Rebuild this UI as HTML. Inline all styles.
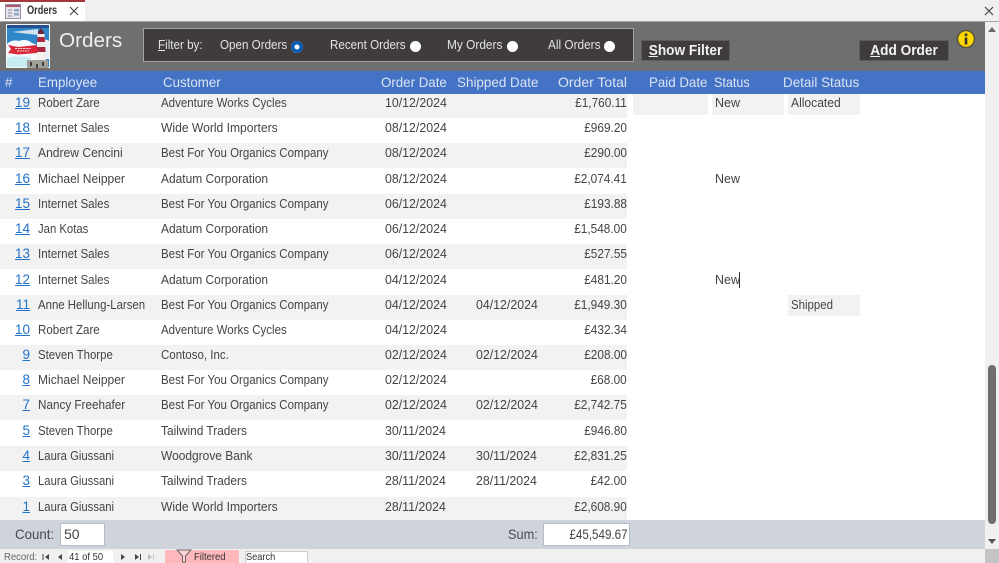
<!DOCTYPE html>
<html style="overflow:hidden;width:999px;height:563px"><head><meta charset="utf-8"><title>Orders</title>
<style>
html,body{margin:0;padding:0;background:#fff}
#p{width:999px;height:563px;position:relative;overflow:hidden;font-family:"Liberation Sans",sans-serif;font-size:13px;color:#444}
body{width:999px;height:563px;overflow:hidden}
div,span,u{white-space:nowrap}
.a{position:absolute}
.sx{transform-origin:0 50%}
.r{position:absolute;left:0;width:985px;height:25px;line-height:25px}
.g::before{content:"";position:absolute;left:0;top:3px;width:627px;height:25px;background:#f2f2f2}
.r span{position:absolute;top:0;transform-origin:0 50%;transform:scaleX(var(--s,.89))}
.r .n{right:955px;color:#2172c8;text-decoration:underline;font-size:13.5px;transform:none}
.e{left:38px}.c{left:161px;--s:.885}.d{left:385px;--s:.95}.s{left:476px;--s:.95}
.r .t{right:358px;--s:.91;transform-origin:100% 50%}
.st{left:715px;--s:.96}.ds{left:791px;--s:.93}
.h{position:absolute;top:71px;height:23px;line-height:23px;color:#dbe4f4;font-size:14px;transform-origin:0 50%;transform:scaleX(var(--s,.95))}
.f{position:absolute;top:38px;line-height:14px;color:#e2e2e2;font-size:12.5px;transform-origin:0 50%;transform:scaleX(var(--s,.93))}
.o{position:absolute;width:11px;height:11px;border-radius:50%;background:#fff;top:41px}
.b{position:absolute;top:40px;height:21px;background:#403c3c;border:1px solid #5c5c5c;box-sizing:border-box}
.b div{position:absolute;top:0;left:0;width:100%;line-height:20px;color:#f2f2f2;font-weight:bold;font-size:15px;text-align:center;transform:scaleX(.91)}
.box{position:absolute;background:#f2f2f2;height:21px}
.nv{position:absolute;top:552px;font-size:10.4px;line-height:11px;height:11px;overflow:hidden;color:#333;transform-origin:0 50%}
</style></head><body><div id="p">

<!-- tab strip -->
<div class="a" style="left:0;top:0;width:999px;height:22px;background:#f0f0f0;border-bottom:1px solid #a6a6a6;box-sizing:border-box"></div>
<div class="a" style="left:0;top:0;width:85px;height:21px;background:#fff"></div>
<div class="a" style="left:0;top:0;width:85px;height:2px;background:#a4373a"></div>
<svg class="a" style="left:5px;top:4px" width="16" height="15" viewBox="0 0 16 15"><rect x=".5" y=".5" width="15" height="14" fill="#e8e4ec" stroke="#9a90a8"/><rect x="1" y="1" width="14" height="2" fill="#b05a70"/><path d="M3 6h4M3 9h4M3 12h4" stroke="#8a8a9a"/><rect x="9" y="5" width="5" height="2.5" fill="#8fa8c8"/><rect x="9" y="9" width="5" height="2.5" fill="#8fa8c8"/></svg>
<div class="a sx" style="left:27px;top:4px;font-size:11.5px;font-weight:bold;line-height:15px;color:#333;transform:scaleX(.8)">Orders</div>
<svg class="a" style="left:69px;top:6px" width="10" height="10" viewBox="0 0 10 10"><path d="M1 1l8 8M9 1l-8 8" stroke="#444" stroke-width="1.1" fill="none"/></svg>
<svg class="a" style="left:984px;top:6px" width="10" height="10" viewBox="0 0 10 10"><path d="M1 1l8 8M9 1l-8 8" stroke="#444" stroke-width="1.2" fill="none"/></svg>

<!-- form header -->
<div class="a" style="left:0;top:22px;width:985px;height:49px;background:#6f6f6f"></div>
<svg class="a" style="left:6px;top:24px" width="44" height="44" viewBox="0 0 44 44">
<rect width="44" height="44" fill="#f4f4f4"/>
<rect x="1" y="1" width="42" height="42" fill="#2f86c8"/>
<rect x="1" y="1" width="42" height="3" fill="#24508f"/>
<path d="M6 8l26-3v6z" fill="#cfe0ee"/>
<path d="M1 20q5-5 12-3 7-3 13 2 5 1 6 5v19H1z" fill="#f3f8fb"/>
<path d="M1 34q6-3 12-1 6-2 12 1v9H1z" fill="#c8ecf3"/>
<path d="M38 16q3-1 5 1v18h-5z" fill="#e6f2f7"/>
<path d="M32 8l3-4 3 4v2h-6z" fill="#6e2638"/>
<path d="M31.500 10h7l1.500 26h-10z" fill="#f4f0ee"/>
<path d="M31.300 13h7.400l.3 5h-8zM30.700 23h8.600l.3 5h-9.200z" fill="#a82a40"/>
<path d="M2 21l10 2 19-2v8l-19 1.500-10-1.500 3-4z" fill="#d9283a"/>
<path d="M9 24.500h16M11 27h12" stroke="#f7d9d9" stroke-width="1.100" stroke-dasharray="2 .7"/>
<path d="M21 36h21v8H21z" fill="#a09f9a"/>
<path d="M25 38v4M37 38v4M31 40v4" stroke="#222" stroke-width="1.500"/>
</svg>
<div class="a" style="left:59px;top:28px;font-size:20.700px;line-height:26px;color:#eee">Orders</div>

<div class="a" style="left:143px;top:28px;width:491px;height:34px;box-sizing:border-box;background:#403c3c;border:1px solid #a3a3a3"></div>
<div class="f" style="left:158px"><u>F</u>ilter by:</div>
<div class="f" style="left:220px">Open Orders</div>
<div class="a" style="left:291px;top:40.500px;width:12px;height:12px;border-radius:50%;background:#fff;box-shadow:inset 0 0 0 3.500px #0a5ab4"></div>
<div class="f" style="left:330px">Recent Orders</div><div class="o" style="left:410px"></div>
<div class="f" style="left:447px;--s:.95">My Orders</div><div class="o" style="left:507px"></div>
<div class="f" style="left:548px;--s:.945">All Orders</div><div class="o" style="left:604px"></div>

<div class="b" style="left:641px;width:89px"><div><u>S</u>how Filter</div></div>
<div class="b" style="left:859px;width:90px"><div><u>A</u>dd Order</div></div>
<svg class="a" style="left:956px;top:29px" width="20" height="20" viewBox="0 0 20 20"><circle cx="10" cy="10" r="8.500" fill="#ffd800" stroke="#5a5540" stroke-width="1.600"/><rect x="8.700" y="8.500" width="2.600" height="7" fill="#333"/><rect x="8.700" y="4.500" width="2.600" height="2.600" fill="#333"/></svg>

<!-- header row -->
<div class="a" style="left:0;top:71px;width:985px;height:23px;background:#4472c4"></div>
<div class="h" style="left:5px">#</div>
<div class="h" style="left:38px">Employee</div>
<div class="h" style="left:163px">Customer</div>
<div class="h" style="left:381px">Order Date</div>
<div class="h" style="left:457px;--s:.96">Shipped Date</div>
<div class="h" style="left:558px;--s:1">Order Total</div>
<div class="h" style="left:649px">Paid Date</div>
<div class="h" style="left:714px;--s:.9">Status</div>
<div class="h" style="left:783px;--s:.96">Detail Status</div>

<!-- body -->
<div class="a" style="left:0;top:94px;width:985px;height:426px;overflow:hidden">
<div style="position:absolute;left:0;top:-94px;width:985px;height:520px">
<div class="r g" style="top:90px"><span class="n">19</span><span class="e">Robert Zare</span><span class="c">Adventure Works Cycles</span><span class="d">10/12/2024</span><span class="t">£1,760.11</span></div>
<div class="box" style="left:633px;top:94px;width:75px"></div>
<div class="box" style="left:712px;top:94px;width:72px"></div>
<div class="box" style="left:788px;top:94px;width:72px"></div>
<div class="r" style="top:90px"><span class="st">New</span><span class="ds">Allocated</span></div>
<div class="r" style="top:115px"><span class="n">18</span><span class="e">Internet Sales</span><span class="c" style="--s:.93">Wide World Importers</span><span class="d">08/12/2024</span><span class="t">£969.20</span></div>
<div class="r g" style="top:140px"><span class="n">17</span><span class="e" style="--s:.93">Andrew Cencini</span><span class="c">Best For You Organics Company</span><span class="d">08/12/2024</span><span class="t">£290.00</span></div>
<div class="r" style="top:166px"><span class="n">16</span><span class="e" style="--s:.925">Michael Neipper</span><span class="c" style="--s:.92">Adatum Corporation</span><span class="d">08/12/2024</span><span class="t">£2,074.41</span><span class="st">New</span></div>
<div class="r g" style="top:191px"><span class="n">15</span><span class="e">Internet Sales</span><span class="c">Best For You Organics Company</span><span class="d">06/12/2024</span><span class="t">£193.88</span></div>
<div class="r" style="top:216px"><span class="n">14</span><span class="e" style="--s:.87">Jan Kotas</span><span class="c" style="--s:.92">Adatum Corporation</span><span class="d">06/12/2024</span><span class="t">£1,548.00</span></div>
<div class="r g" style="top:241px"><span class="n">13</span><span class="e">Internet Sales</span><span class="c">Best For You Organics Company</span><span class="d">06/12/2024</span><span class="t">£527.55</span></div>
<div class="r" style="top:267px"><span class="n">12</span><span class="e">Internet Sales</span><span class="c" style="--s:.92">Adatum Corporation</span><span class="d">04/12/2024</span><span class="t">£481.20</span><span class="st">New</span></div>
<div class="a" style="left:739px;top:272px;width:1px;height:16px;background:#333"></div>
<div class="r g" style="top:292px"><span class="n">11</span><span class="e" style="--s:.877">Anne Hellung-Larsen</span><span class="c">Best For You Organics Company</span><span class="d">04/12/2024</span><span class="s">04/12/2024</span><span class="t">£1,949.30</span></div>
<div class="box" style="left:788px;top:295px;width:72px"></div>
<div class="r" style="top:292px"><span class="ds" style="--s:.88">Shipped</span></div>
<div class="r" style="top:317px"><span class="n">10</span><span class="e">Robert Zare</span><span class="c">Adventure Works Cycles</span><span class="d">04/12/2024</span><span class="t">£432.34</span></div>
<div class="r g" style="top:342px"><span class="n">9</span><span class="e" style="--s:.88">Steven Thorpe</span><span class="c">Contoso, Inc.</span><span class="d">02/12/2024</span><span class="s">02/12/2024</span><span class="t">£208.00</span></div>
<div class="r" style="top:367px"><span class="n">8</span><span class="e" style="--s:.925">Michael Neipper</span><span class="c">Best For You Organics Company</span><span class="d">02/12/2024</span><span class="t">£68.00</span></div>
<div class="r g" style="top:392px"><span class="n">7</span><span class="e" style="--s:.9">Nancy Freehafer</span><span class="c">Best For You Organics Company</span><span class="d">02/12/2024</span><span class="s">02/12/2024</span><span class="t">£2,742.75</span></div>
<div class="r" style="top:418px"><span class="n">5</span><span class="e" style="--s:.88">Steven Thorpe</span><span class="c" style="--s:.915">Tailwind Traders</span><span class="d">30/11/2024</span><span class="t">£946.80</span></div>
<div class="r g" style="top:443px"><span class="n">4</span><span class="e" style="--s:.87">Laura Giussani</span><span class="c" style="--s:.92">Woodgrove Bank</span><span class="d">30/11/2024</span><span class="s">30/11/2024</span><span class="t">£2,831.25</span></div>
<div class="r" style="top:468px"><span class="n">3</span><span class="e" style="--s:.87">Laura Giussani</span><span class="c" style="--s:.915">Tailwind Traders</span><span class="d">28/11/2024</span><span class="s">28/11/2024</span><span class="t">£42.00</span></div>
<div class="r g" style="top:494px"><span class="n">1</span><span class="e" style="--s:.87">Laura Giussani</span><span class="c" style="--s:.93">Wide World Importers</span><span class="d">28/11/2024</span><span class="t">£2,608.90</span></div>
</div></div>

<!-- footer -->
<div class="a" style="left:0;top:520px;width:985px;height:29px;background:#cfd3dc"></div>
<div class="a sx" style="left:15px;top:526px;font-size:14px;line-height:17px;color:#4a4a4a;transform:scaleX(.95)">Count:</div>
<div class="a" style="left:60px;top:523px;width:45px;height:23px;box-sizing:border-box;background:#fff;border:1px solid #b8bcc4;line-height:21px;padding-left:3px;font-size:14px">50</div>
<div class="a sx" style="left:508px;top:526px;font-size:14px;line-height:17px;color:#4a4a4a;transform:scaleX(.91)">Sum:</div>
<div class="a" style="left:543px;top:523px;width:87px;height:23px;box-sizing:border-box;background:#fff;border:1px solid #b8bcc4"></div>
<div class="a" style="right:371px;top:525px;line-height:19px;font-size:13.500px;transform-origin:100% 50%;transform:scaleX(.86)">£45,549.67</div>

<!-- scrollbar -->
<div class="a" style="left:985px;top:22px;width:14px;height:527px;background:#f0f0f0"></div>
<svg class="a" style="left:987px;top:26px" width="10" height="7"><path d="M1 6l4-5 4 5z" fill="#666"/></svg>
<div class="a" style="left:988px;top:365px;width:8px;height:159px;border-radius:4px;background:#6e6e6e"></div>
<svg class="a" style="left:987px;top:538px" width="10" height="7"><path d="M1 1l4 5 4-5z" fill="#555"/></svg>

<!-- nav bar -->
<div class="a" style="left:0;top:549px;width:985px;height:14px;background:#f0f0f0"></div>
<div class="a" style="left:985px;top:549px;width:14px;height:14px;background:#c4c4c4"></div>
<div class="nv" style="left:4px;color:#666;transform:scaleX(.91)">Record:</div>
<svg class="a" style="left:42px;top:553px" width="24" height="9"><path d="M1 1v6" stroke="#444"/><path d="M7 1L3 4l4 3zM20 1l-4 3 4 3z" fill="#444"/></svg>
<div class="a" style="left:68px;top:551px;width:45px;height:12px;background:#fff;overflow:hidden"></div>
<div class="nv" style="left:69px;transform:scaleX(.91)">41 of 50</div>
<svg class="a" style="left:120px;top:553px" width="36" height="9"><path d="M1 1l4 3-4 3zM15 1l4 3-4 3z" fill="#444"/><path d="M20.500 1v6" stroke="#444"/><path d="M28 1l4 3-4 3z" fill="#bbb"/><path d="M33.500 1v6" stroke="#ccc"/></svg>
<div class="a" style="left:165px;top:550px;width:74px;height:13px;background:#ffb9bd"></div>
<svg class="a" style="left:176px;top:549px" width="17" height="14"><path d="M1 1h14L9.500 7v6H6.500V7z" fill="#ffd4d6" stroke="#666"/></svg>
<div class="nv" style="left:194px;transform:scaleX(.91)">Filtered</div>
<div class="a" style="left:245px;top:551px;width:63px;height:12px;background:#fff;border:1px solid #ccc;border-bottom:0;box-sizing:border-box"></div>
<div class="nv" style="left:246px;transform:scaleX(.89)">Search</div>
</div></body></html>
